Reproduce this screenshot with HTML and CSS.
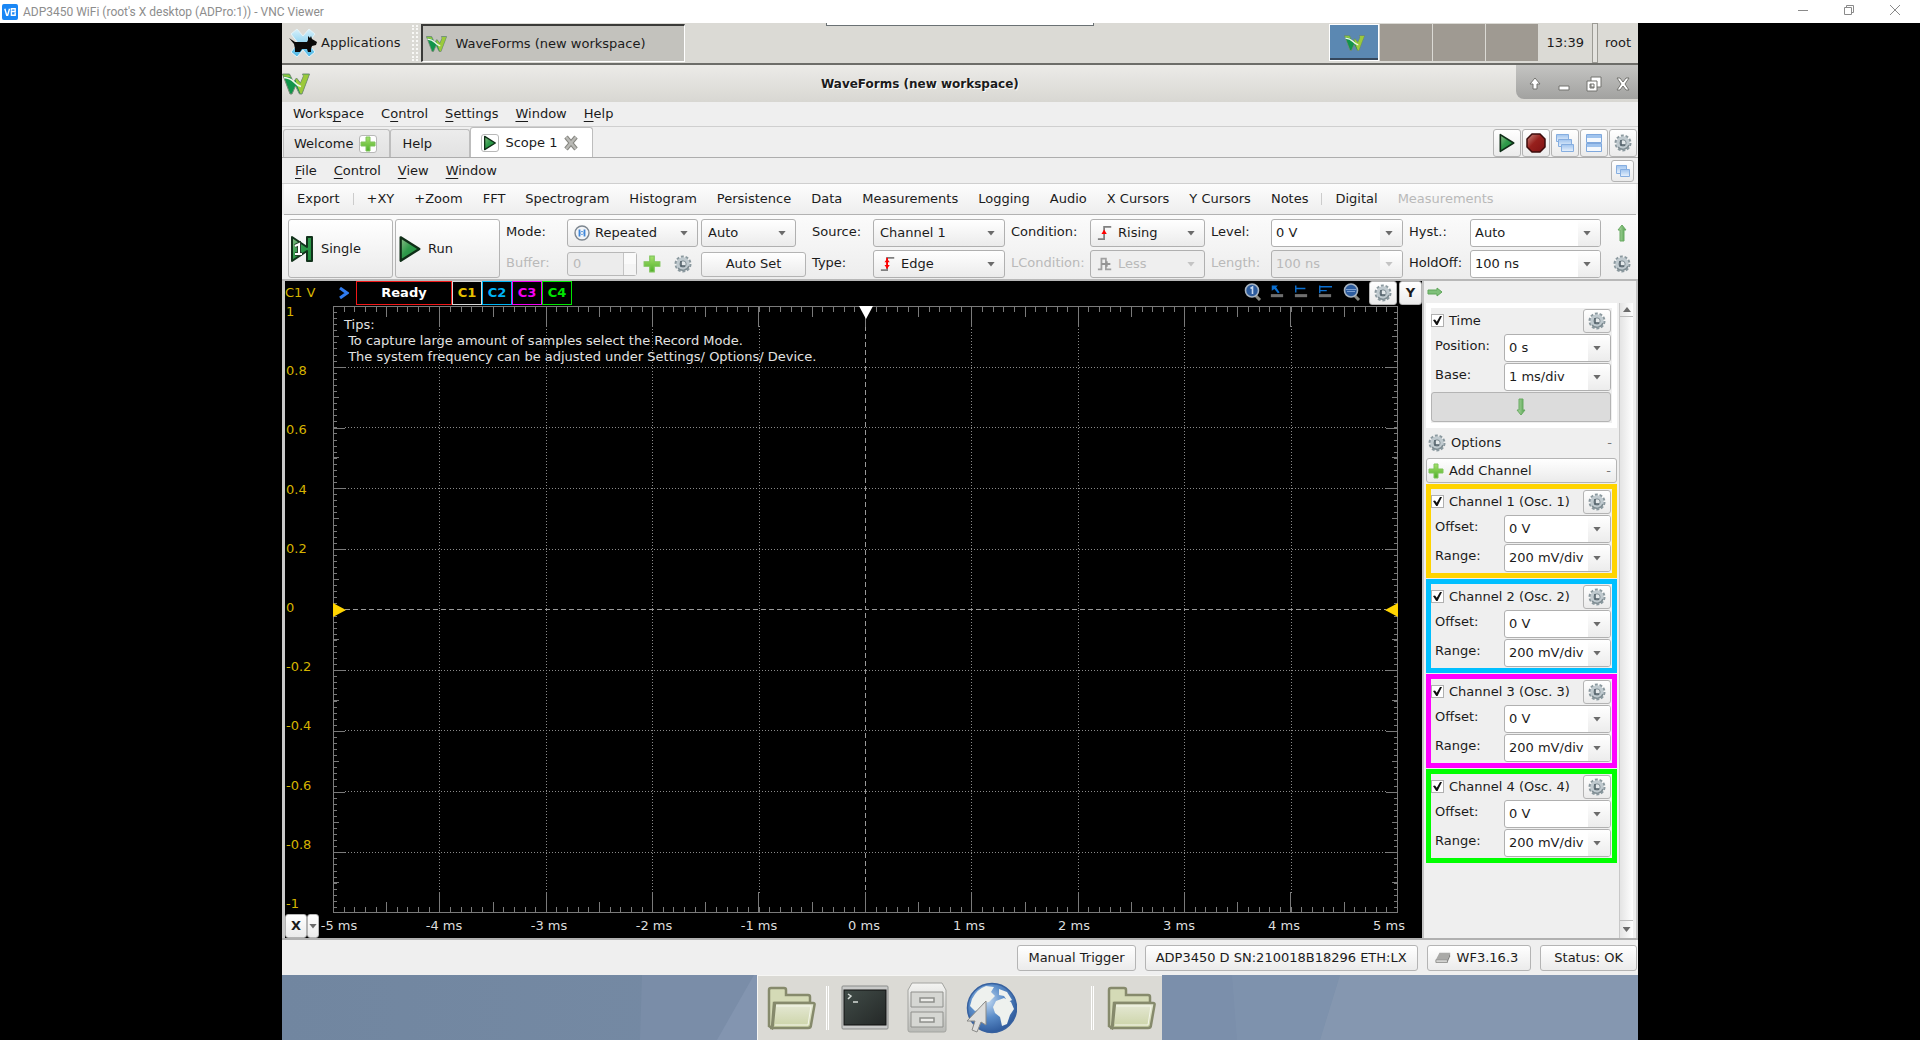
FILE: index.html
```html
<!DOCTYPE html>
<html lang="en">
<head>
<meta charset="utf-8">
<title>ADP3450 WiFi (root's X desktop (ADPro:1)) - VNC Viewer</title>
<link rel="stylesheet" href="styles.css">
</head>
<body>
<svg class="defs" aria-hidden="true">
  <defs>
    <linearGradient id="g-green" x1="0" y1="0" x2="1" y2="1"><stop offset="0" stop-color="#8fc08a"/><stop offset=".45" stop-color="#2f9a4a"/><stop offset="1" stop-color="#1c8a3c"/></linearGradient>
    <linearGradient id="g-plus" x1="0" y1="0" x2="0" y2="1"><stop offset="0" stop-color="#a5e26a"/><stop offset="1" stop-color="#4fae2a"/></linearGradient>
    <linearGradient id="g-arrow" x1="0" y1="0" x2="1" y2="0"><stop offset="0" stop-color="#b5dca9"/><stop offset="1" stop-color="#4fa04a"/></linearGradient>
    <linearGradient id="g-red" x1="0" y1="0" x2="1" y2="1"><stop offset="0" stop-color="#c98a80"/><stop offset=".45" stop-color="#97201c"/><stop offset="1" stop-color="#7e1214"/></linearGradient>
    <linearGradient id="g-win" x1="0" y1="0" x2="0" y2="1"><stop offset="0" stop-color="#9fc3ee"/><stop offset="1" stop-color="#e9f2fc"/></linearGradient>
    <linearGradient id="g-folder" x1="0" y1="0" x2="0" y2="1"><stop offset="0" stop-color="#e6e9d6"/><stop offset="1" stop-color="#cbd3a6"/></linearGradient>
    <linearGradient id="g-metal" x1="0" y1="0" x2="0" y2="1"><stop offset="0" stop-color="#f4f4f2"/><stop offset="1" stop-color="#b9bab6"/></linearGradient>
    <linearGradient id="g-term" x1="0" y1="0" x2="1" y2="1"><stop offset="0" stop-color="#414c48"/><stop offset="1" stop-color="#242827"/></linearGradient>
    <radialGradient id="g-globe" cx=".4" cy=".35" r=".7"><stop offset="0" stop-color="#c3daf2"/><stop offset=".5" stop-color="#5a8cc8"/><stop offset="1" stop-color="#2a5597"/></radialGradient>
    <linearGradient id="g-x" x1="0" y1="0" x2="0" y2="1"><stop offset="0" stop-color="#d9f1fb"/><stop offset="1" stop-color="#4bb7e6"/></linearGradient>
  </defs>
  <symbol id="i-logo" viewBox="0 0 28 22">
    <path d="M.5 1h7l4 8 3-4 4 5 3-7-1-2h7l-7.500 20h-2.500l-4-8-3.500 8H8z" fill="#12954a" stroke="#7b8a78"/>
    <path d="M21 1.500h6L19.800 20.500h-1.500L15 12l-1.500-5 1-1.500 4 5 3-7z" fill="#9cc93b"/>
    <path d="M1 1.500h6l2 3-7-1z" fill="#8cc63f"/>
    <path d="M2 4.500q6 .5 10 4.500 3 3.500 7 4.500" fill="none" stroke="#eef8ea" stroke-width="1.700"/>
  </symbol>
  <symbol id="i-xfce" viewBox="0 0 30 30">
    <path d="M3 6l6-5 6 7 6-7 6 5-7 9 7 9-6 5-6-7-6 7-6-5 7-9z" fill="url(#g-x)" stroke="#e6f4f8"/>
    <path d="M1 10l6 4h12l1-2 0-4 2 2 1-2 1 3 5 3-1 3-4 1-1 3v3h-3l-1-3h-5l-2 3H7v-3l-1-5z" fill="#0a0a0a"/>
  </symbol>
  <symbol id="i-plus" viewBox="0 0 16 16"><path d="M6 1h4v5h5v4h-5v5H6v-5H1V6h5z" fill="url(#g-plus)" stroke="#7fc45a"/></symbol>
  <symbol id="i-play" viewBox="0 0 16 18"><path d="M2 1.500l12 7.500-12 7.500z" fill="url(#g-green)" stroke="#0f2e17" stroke-width="1.500" stroke-linejoin="round"/></symbol>
  <symbol id="i-single" viewBox="0 0 26 28">
    <path d="M2 2l15 10V2h5v24h-5V16L2 26z" fill="url(#g-green)" stroke="#12331c" stroke-width="2" stroke-linejoin="round"/>
    <path d="M5 11l4-2v10M5 19h7" fill="none" stroke="#26402c" stroke-width="4"/>
    <path d="M5 11l4-2v10M5 19h7" fill="none" stroke="#fff" stroke-width="2"/>
  </symbol>
  <symbol id="i-stop" viewBox="0 0 20 20"><path d="M6 1h8l5 5v8l-5 5H6l-5-5V6z" fill="url(#g-red)" stroke="#3c0c0c" stroke-width="1.500"/></symbol>
  <symbol id="i-gear" viewBox="0 0 18 18">
    <circle cx="9" cy="9" r="7" fill="none" stroke="#8b999f" stroke-width="3" stroke-dasharray="2.700 1.700"/>
    <circle cx="9" cy="9" r="5" fill="none" stroke="#c0cacf" stroke-width="3.400"/>
    <path d="M4 13a6.500 6.500 0 0 0 11-2" fill="none" stroke="#7f8d93" stroke-width="1.500"/>
    <circle cx="9" cy="9" r="3.200" fill="#e4e9eb" stroke="#7d8b92"/>
    <path d="M7 6v5h4" fill="none" stroke="#4d5c66" stroke-width="1.500"/>
  </symbol>
  <symbol id="i-close" viewBox="0 0 16 16"><path d="M3 2l10 12M13 2L3 14" stroke="#85857f" stroke-width="4.500"/><path d="M3 2l10 12M13 2L3 14" stroke="#b9b9b5" stroke-width="2.500"/></symbol>
  <symbol id="i-cascade" viewBox="0 0 20 20"><g fill="url(#g-win)" stroke="#86aee0"><path d="M1.500 1.500h12v7h-12z"/><path d="M3.500 6.500h13v7h-13z"/><path d="M6.500 11.500h12v7h-12z"/></g></symbol>
  <symbol id="i-tile" viewBox="0 0 20 20"><g fill="#f4f8fd" stroke="#7fa8dd"><path d="M2.500 1.500h15v8h-15z"/><path d="M2.500 10.500h15v8h-15z"/></g><path d="M3 2h14v3H3zM3 11h14v3H3z" fill="#9fc3ee"/></symbol>
  <symbol id="i-restore" viewBox="0 0 16 16"><g fill="url(#g-win)" stroke="#86aee0"><path d="M1.500 2.500h10v8h-10z"/><path d="M5.500 6.500h9v7h-9z"/></g></symbol>
  <symbol id="i-repeat" viewBox="0 0 16 16"><circle cx="8" cy="8" r="7" fill="#f2f4f7" stroke="#7d868f" stroke-width="1.400"/><path d="M5.500 4.500v7M10.500 4.500v7" stroke="#3e86d8" stroke-width="1.800"/><path d="M6 8l3-2v4zM10 8L7 6v4z" fill="#3e86d8"/></symbol>
  <symbol id="i-rising" viewBox="0 0 16 18"><path d="M0 16h7V2h8" fill="none" stroke="#808080" stroke-width="2"/><path d="M7 5l3 5H4z" fill="#f00"/></symbol>
  <symbol id="i-edge" viewBox="0 0 16 18"><path d="M0 16h7V2h8" fill="none" stroke="#808080" stroke-width="2"/><path d="M7 2v12" stroke="#f00" stroke-width="2"/><path d="M7 3l3 4H4zM7 14l3-4H4z" fill="#f00"/></symbol>
  <symbol id="i-less" viewBox="0 0 16 18"><path d="M0 15h4V3h5v12h6" fill="none" stroke="#a0a0a0" stroke-width="2"/><path d="M4 9h10M10 6v6" stroke="#959595" stroke-width="2"/></symbol>
  <symbol id="i-up" viewBox="0 0 10 18"><path d="M5 1l4 5H7v11H3V6H1z" fill="url(#g-arrow)" stroke="#69aa62"/></symbol>
  <symbol id="i-down" viewBox="0 0 10 18"><path d="M5 17l4-5H7V1H3v11H1z" fill="url(#g-arrow)" stroke="#69aa62"/></symbol>
  <symbol id="i-right" viewBox="0 0 16 10"><path d="M15 5l-5 4V7H1V3h9V1z" fill="#7fc07a" stroke="#5ea658"/></symbol>
  <symbol id="i-zoom1" viewBox="0 0 18 18"><path d="M11 12l5 5" stroke="#8a8a84" stroke-width="3"/><circle cx="8" cy="7.500" r="6.500" fill="#2d5c9e" stroke="#a8b4c0" stroke-width="1.600"/><path d="M6.500 5.500L8.500 4v7" fill="none" stroke="#c5d8f0" stroke-width="1.600"/></symbol>
  <symbol id="i-zoom" viewBox="0 0 18 18"><path d="M11 12l5 5" stroke="#8a8a84" stroke-width="3"/><circle cx="8" cy="7.500" r="6.500" fill="#2d5c9e" stroke="#a8b4c0" stroke-width="1.600"/><path d="M3 6.500h10M4 8.500h8" stroke="#7d9fd0"/></symbol>
  <symbol id="i-cursor" viewBox="0 0 16 14"><path d="M1 10h14v3.500H1z" fill="#6f6f6f"/><path d="M2 0h7L7 2l4 6-2 1-4-5-3 2z" fill="#0b6fd0"/></symbol>
  <symbol id="i-mark1" viewBox="0 0 16 14"><path d="M1 10h14v3.500H1z" fill="#6f6f6f"/><path d="M2 0v8M2 3.500h11" stroke="#0b6fd0" stroke-width="1.600"/></symbol>
  <symbol id="i-mark2" viewBox="0 0 16 14"><path d="M1 10h14v3.500H1z" fill="#6f6f6f"/><path d="M2 0v9M2 1.500h14M2 6h8" stroke="#0b6fd0" stroke-width="1.600"/></symbol>
  <symbol id="i-drive" viewBox="0 0 18 14"><path d="M5 1h12l-3 8H1z" fill="#a9a9a7"/><path d="M1 9h13v3H1z" fill="#d8d8d6" stroke="#8d8d8b"/><path d="M14 9l3-8v4l-3 7z" fill="#7f7f7d"/></symbol>
  <symbol id="i-folder" viewBox="0 0 50 44">
    <path d="M3 40V4q0-2 2-2h13q2 0 2 2v5h22q2 0 2 2v6H8L6 42z" fill="#d4dab6" stroke="#868a6c" stroke-width="2.500"/>
    <path d="M9 17h38q2 0 1.500 2L45 39q0 3-3 3H4q3 0 3-5z" fill="url(#g-folder)" stroke="#868a6c" stroke-width="2.500"/>
    <path d="M10 20h35l-3 19H9" fill="none" stroke="#f4f6ea"/>
  </symbol>
  <symbol id="i-term" viewBox="0 0 48 46"><rect x="1" y="1" width="46" height="43" rx="1" fill="#c9cac9" stroke="#8b8d8b"/><rect x="3" y="5" width="42" height="35" fill="url(#g-term)" stroke="#111"/><path d="M7 9l3 2-3 3M12 17h5" fill="none" stroke="#d6dcd8" stroke-width="1.500"/></symbol>
  <symbol id="i-cabinet" viewBox="0 0 40 52">
    <path d="M5 1h30l4 7v40q0 2-2 2H3q-2 0-2-2V8z" fill="url(#g-metal)" stroke="#a3a4a0"/>
    <g fill="#d6d7d3" stroke="#8f908c"><path d="M4 10h32v15H4zM4 30h32v15H4z"/></g>
    <g fill="#ecece9" stroke="#8f908c" stroke-width="1.500"><path d="M13 16h14v4H13zM13 36h14v4H13z"/></g>
  </symbol>
  <symbol id="i-globe" viewBox="0 0 52 54">
    <circle cx="27" cy="27" r="24.500" fill="url(#g-globe)" stroke="#37619f" stroke-width="1.500"/>
    <path d="M7 18q5-10 14-13l8 1-3 5 4 4-6 6-6 1-2 6-6 2-5-5zM34 8l8 3 5 8-4 2-4-6-5-1zM31 20l8-3 7 4 3 7-4 6-3 9-5 2-2-9-5-4-2-6z" fill="#eef1ee"/>
    <path d="M21 20v24l-5-3-4 10-5-2 3-9H2z" fill="#dededc" stroke="#8a8a88"/>
  </symbol>
</svg>

<header class="viewer-bar">
  <svg class="viewer-logo" viewBox="0 0 17 17"><rect width="17" height="17" rx="2" fill="#1a87f5"/><path d="M3 5l2 7h1l2-7M10 7V5h4v3h-4v4h4V9" fill="none" stroke="#fff" stroke-width="1.500"/></svg>
  <h1 class="viewer-title">ADP3450 WiFi (root's X desktop (ADPro:1)) - VNC Viewer</h1>
  <div class="viewer-controls">
    <button aria-label="Minimize"><svg viewBox="0 0 10 10"><path d="M0 5.500h10"/></svg></button>
    <button aria-label="Restore"><svg viewBox="0 0 10 10"><path d="M.5 2.500h7v7h-7zM2.500 2.500v-2h7v7h-2"/></svg></button>
    <button aria-label="Close"><svg viewBox="0 0 10 10"><path d="M0 0l10 10M10 0L0 10"/></svg></button>
  </div>
</header>

<main class="remote">
  <div class="panel">
    <button class="apps"><svg class="s30"><use href="#i-xfce"/></svg>Applications</button>
    <span class="grip"></span>
    <button class="task"><svg class="logo-sm"><use href="#i-logo"/></svg>WaveForms (new workspace)</button>
    <span class="viewer-tab"></span>
    <div class="pager">
      <button class="page current" aria-label="Workspace 1"><svg class="logo-sm"><use href="#i-logo"/></svg></button>
      <button class="page" aria-label="Workspace 2"></button>
      <button class="page" aria-label="Workspace 3"></button>
      <button class="page" aria-label="Workspace 4"></button>
    </div>
    <time class="clock">13:39</time>
    <span class="handle"></span>
    <button class="user">root</button>
  </div>

  <section class="window">
    <div class="titlebar">
      <svg class="logo-lg"><use href="#i-logo"/></svg>
      <h2>WaveForms (new workspace)</h2>
      <div class="wm">
        <button aria-label="Shade"><svg viewBox="0 0 16 16"><path d="M8 2l5 6h-3v5H6V8H3z"/></svg></button>
        <button aria-label="Minimize"><svg viewBox="0 0 16 16"><path d="M3 10h10v4H3z"/></svg></button>
        <button aria-label="Restore"><svg viewBox="0 0 16 16"><path d="M5 1h10v10H5z"/><path d="M1 5h10v10H1zM4 8v4h4V8z"/></svg></button>
        <button aria-label="Close"><svg viewBox="0 0 16 16"><path d="M2 2h3l3 4 3-4h3l-4 6 4 6h-3l-3-4-3 4H2l4-6z"/></svg></button>
      </div>
    </div>

    <nav class="menubar">
      <button>Works<u>p</u>ace</button><button>C<u>o</u>ntrol</button><button><u>S</u>ettings</button><button><u>W</u>indow</button><button><u>H</u>elp</button>
    </nav>

    <div class="tabbar">
      <div class="tab"><button>Welcome</button><button class="tab-icon" aria-label="New instrument"><svg class="s16"><use href="#i-plus"/></svg></button></div>
      <div class="tab help"><button>Help</button></div>
      <div class="tab active"><button class="tab-icon" aria-label="Run scope"><svg class="s16"><use href="#i-play"/></svg></button><button>Scope 1</button><button aria-label="Close tab"><svg class="s16"><use href="#i-close"/></svg></button></div>
      <div class="tab-tools">
        <button class="btn" aria-label="Run all"><svg class="s20"><use href="#i-play"/></svg></button>
        <button class="btn" aria-label="Stop all"><svg class="s20"><use href="#i-stop"/></svg></button>
        <button class="btn" aria-label="Cascade"><svg class="s20"><use href="#i-cascade"/></svg></button>
        <button class="btn" aria-label="Tile"><svg class="s20"><use href="#i-tile"/></svg></button>
        <button class="btn" aria-label="Settings"><svg class="s18"><use href="#i-gear"/></svg></button>
      </div>
    </div>

    <nav class="menubar scope-menu">
      <button><u>F</u>ile</button><button><u>C</u>ontrol</button><button><u>V</u>iew</button><button><u>W</u>indow</button>
      <button class="btn undock" aria-label="Undock"><svg class="s16"><use href="#i-restore"/></svg></button>
    </nav>

    <div class="toolbar">
      <button>Export</button><i></i><button>+XY</button><button>+Zoom</button><button>FFT</button><button>Spectrogram</button><button>Histogram</button><button>Persistence</button><button>Data</button><button>Measurements</button><button>Logging</button><button>Audio</button><button>X Cursors</button><button>Y Cursors</button><button>Notes</button><i></i><button>Digital</button><button disabled>Measurements</button>
    </div>

    <div class="controls">
      <button class="btn big"><svg class="s28"><use href="#i-single"/></svg>Single</button>
      <button class="btn big run"><svg class="s28"><use href="#i-play"/></svg>Run</button>
      <div class="fields mode">
        <label for="mode">Mode:</label>
        <span class="select icon"><select id="mode"><option>Repeated</option></select><svg class="s16 pic"><use href="#i-repeat"/></svg></span>
        <span class="select"><select aria-label="Trigger mode"><option>Auto</option></select></span>
        <label for="buffer" class="off">Buffer:</label>
        <span class="buffer"><span class="spin"><input id="buffer" value="0" disabled><span class="steps"></span></span><button class="flat" aria-label="Add buffer"><svg class="s18"><use href="#i-plus"/></svg></button><button class="flat" aria-label="Buffer options"><svg class="s18"><use href="#i-gear"/></svg></button></span>
        <button class="btn autoset">Auto Set</button>
      </div>
      <div class="fields source">
        <label for="source">Source:</label>
        <span class="select"><select id="source"><option>Channel 1</option></select></span>
        <label for="type">Type:</label>
        <span class="select icon"><select id="type"><option>Edge</option></select><svg class="s16 pic"><use href="#i-edge"/></svg></span>
      </div>
      <div class="fields cond">
        <label for="cond">Condition:</label>
        <span class="select icon"><select id="cond"><option>Rising</option></select><svg class="s16 pic"><use href="#i-rising"/></svg></span>
        <label for="lcond" class="off">LCondition:</label>
        <span class="select icon"><select id="lcond" disabled><option>Less</option></select><svg class="s16 pic"><use href="#i-less"/></svg></span>
      </div>
      <div class="fields level">
        <label for="level">Level:</label>
        <span class="combo"><input id="level" value="0 V"><button aria-label="Choose level"></button></span>
        <label for="length" class="off">Length:</label>
        <span class="combo"><input id="length" value="100 ns" disabled><button aria-label="Choose length" disabled></button></span>
      </div>
      <div class="fields hyst">
        <label for="hyst">Hyst.:</label>
        <span class="combo"><input id="hyst" value="Auto"><button aria-label="Choose hysteresis"></button></span>
        <button class="flat" aria-label="Collapse"><svg class="s18"><use href="#i-up"/></svg></button>
        <label for="holdoff">HoldOff:</label>
        <span class="combo"><input id="holdoff" value="100 ns"><button aria-label="Choose hold-off"></button></span>
        <button class="flat" aria-label="Trigger options"><svg class="s18"><use href="#i-gear"/></svg></button>
      </div>
    </div>

    <div class="work">
      <div class="scope">
        <div class="scope-head">
          <span class="unit">C1 V</span>
          <svg class="chev" viewBox="0 0 10 12"><path d="M1 1l7 5-7 5" fill="none" stroke="#2f7bf0" stroke-width="3"/></svg>
          <strong class="state">Ready</strong>
          <button class="ch c1">C1</button><button class="ch c2">C2</button><button class="ch c3">C3</button><button class="ch c4">C4</button>
          <div class="zooms">
            <button class="flat" aria-label="Zoom 1:1"><svg class="s18"><use href="#i-zoom1"/></svg></button>
            <button class="flat" aria-label="Cursor"><svg class="s14"><use href="#i-cursor"/></svg></button>
            <button class="flat" aria-label="Marker"><svg class="s14"><use href="#i-mark1"/></svg></button>
            <button class="flat" aria-label="Markers"><svg class="s14"><use href="#i-mark2"/></svg></button>
            <button class="flat" aria-label="Zoom"><svg class="s18"><use href="#i-zoom"/></svg></button>
          </div>
          <button class="btn gearbtn" aria-label="Plot options"><svg class="s18"><use href="#i-gear"/></svg></button>
          <button class="btn ybtn">Y</button>
        </div>
        <div class="plot-row">
          <div class="y-axis"><span>1</span><span>0.8</span><span>0.6</span><span>0.4</span><span>0.2</span><span>0</span><span>-0.2</span><span>-0.4</span><span>-0.6</span><span>-0.8</span><span>-1</span></div>
          <div class="plot">
            <svg class="grid" viewBox="0 0 1066 608" preserveAspectRatio="none" shape-rendering="crispEdges">
              <g stroke="#8a8a8a" stroke-dasharray="1 2" fill="none">
                <path d="M106.500 20v568M213.500 20v568M319.500 20v568M426.500 20v568M639.500 20v568M746.500 20v568M852.500 20v568M959.500 20v568"/>
                <path d="M12 61.500h1042M12 121.500h1042M12 182.500h1042M12 243.500h1042M12 365.500h1042M12 425.500h1042M12 486.500h1042M12 547.500h1042"/>
              </g>
              <path d="M532.500 20v568M12 304.500h1042" stroke="#9a9a9a" stroke-dasharray="5 3"/>
              <g stroke="#7a7a7a" fill="none">
                <path d="M.5 .5h1065v607H.5z"/>
                <path d="M0 3.500h1066M0 604.500h1066" stroke-width="6" stroke-dasharray="1 9.650"/>
                <path d="M53.250 6h1000M53.250 602h1000" stroke-width="11" stroke-dasharray="1 105.500"/>
                <path d="M106.250 11h900M106.250 597h900" stroke-width="21" stroke-dasharray="1 105.500"/>
                <path d="M2 0v608M1064 0v608" stroke-width="4" stroke-dasharray="1 5.080"/>
                <path d="M3.500 30v560M1062.500 30v560" stroke-width="6" stroke-dasharray="1 59.800"/>
                <path d="M6.500 61v530M1059.500 61v530" stroke-width="12" stroke-dasharray="1 59.800"/>
              </g>
            </svg>
            <svg class="mark top" viewBox="0 0 14 14"><path d="M0 0h14L7 13z" fill="#fff"/></svg>
            <svg class="mark left" viewBox="0 0 14 14"><path d="M0 0v14l13-7z" fill="#ffd400"/></svg>
            <svg class="mark right" viewBox="0 0 14 14"><path d="M14 0v14L1 7z" fill="#ffd400"/></svg>
            <p class="tips">Tips:
 To capture large amount of samples select the Record Mode.
 The system frequency can be adjusted under Settings/ Options/ Device.</p>
          </div>
        </div>
        <div class="x-row">
          <button class="btn xbtn">X</button><button class="btn xdrop" aria-label="X axis menu"></button>
          <div class="x-axis"><span>-5 ms</span><span>-4 ms</span><span>-3 ms</span><span>-2 ms</span><span>-1 ms</span><span>0 ms</span><span>1 ms</span><span>2 ms</span><span>3 ms</span><span>4 ms</span><span>5 ms</span></div>
        </div>
      </div>

      <aside class="side">
        <button class="flat hide" aria-label="Hide panel"><svg class="s16"><use href="#i-right"/></svg></button>
        <div class="side-body">
          <div class="groups">
            <fieldset class="group time">
              <label class="check"><input type="checkbox" checked>Time</label><button class="btn gear" aria-label="Time options"><svg class="s18"><use href="#i-gear"/></svg></button>
              <label for="pos">Position:</label><span class="combo"><input id="pos" value="0 s"><button aria-label="Choose position"></button></span>
              <label for="base">Base:</label><span class="combo"><input id="base" value="1 ms/div"><button aria-label="Choose base"></button></span>
              <button class="btn expand" aria-label="Expand"><svg class="s18"><use href="#i-down"/></svg></button>
            </fieldset>
            <button class="options"><svg class="s18"><use href="#i-gear"/></svg>Options<span>-</span></button>
            <button class="btn add"><svg class="s16"><use href="#i-plus"/></svg>Add Channel<span>-</span></button>
            <fieldset class="group ch-1">
              <label class="check"><input type="checkbox" checked>Channel 1 (Osc. 1)</label><button class="btn gear" aria-label="Channel 1 options"><svg class="s18"><use href="#i-gear"/></svg></button>
              <label for="o1">Offset:</label><span class="combo"><input id="o1" value="0 V"><button aria-label="Choose offset"></button></span>
              <label for="r1">Range:</label><span class="combo"><input id="r1" value="200 mV/div"><button aria-label="Choose range"></button></span>
            </fieldset>
            <fieldset class="group ch-2">
              <label class="check"><input type="checkbox" checked>Channel 2 (Osc. 2)</label><button class="btn gear" aria-label="Channel 2 options"><svg class="s18"><use href="#i-gear"/></svg></button>
              <label for="o2">Offset:</label><span class="combo"><input id="o2" value="0 V"><button aria-label="Choose offset"></button></span>
              <label for="r2">Range:</label><span class="combo"><input id="r2" value="200 mV/div"><button aria-label="Choose range"></button></span>
            </fieldset>
            <fieldset class="group ch-3">
              <label class="check"><input type="checkbox" checked>Channel 3 (Osc. 3)</label><button class="btn gear" aria-label="Channel 3 options"><svg class="s18"><use href="#i-gear"/></svg></button>
              <label for="o3">Offset:</label><span class="combo"><input id="o3" value="0 V"><button aria-label="Choose offset"></button></span>
              <label for="r3">Range:</label><span class="combo"><input id="r3" value="200 mV/div"><button aria-label="Choose range"></button></span>
            </fieldset>
            <fieldset class="group ch-4">
              <label class="check"><input type="checkbox" checked>Channel 4 (Osc. 4)</label><button class="btn gear" aria-label="Channel 4 options"><svg class="s18"><use href="#i-gear"/></svg></button>
              <label for="o4">Offset:</label><span class="combo"><input id="o4" value="0 V"><button aria-label="Choose offset"></button></span>
              <label for="r4">Range:</label><span class="combo"><input id="r4" value="200 mV/div"><button aria-label="Choose range"></button></span>
            </fieldset>
          </div>
          <div class="scroll"><span class="tri up"></span><span class="tri down"></span></div>
        </div>
      </aside>
    </div>

    <footer class="status">
      <button class="btn">Manual Trigger</button>
      <button class="btn">ADP3450 D SN:210018B18296 ETH:LX</button>
      <button class="btn ver"><svg class="s16"><use href="#i-drive"/></svg>WF3.16.3</button>
      <button class="btn ok">Status: OK</button>
    </footer>
  </section>

  <div class="desktop">
    <svg class="wallpaper" viewBox="0 0 1356 65" preserveAspectRatio="none"><path d="M360 0h115v65H358z" fill="#7a8da8"/><path d="M472 0h3v65h-40z" fill="#8395b0"/><path d="M880 0h80l6 65h-86z" fill="#7b8fab"/><path d="M950 0h108l-20 65h-83z" fill="#7e92ad"/><path d="M1058 0h298v65h-318z" fill="#8597b0"/></svg>
    <nav class="dock">
      <button aria-label="Desktop folder"><svg class="folder"><use href="#i-folder"/></svg></button>
      <i></i>
      <button aria-label="Terminal"><svg class="term"><use href="#i-term"/></svg></button>
      <button aria-label="File manager"><svg class="cab"><use href="#i-cabinet"/></svg></button>
      <button aria-label="Web browser"><svg class="globe"><use href="#i-globe"/></svg></button>
      <i class="last"></i>
      <button aria-label="Home folder"><svg class="folder"><use href="#i-folder"/></svg></button>
    </nav>
  </div>
</main>
</body>
</html>
```
FILE: styles.css
```css
* { box-sizing: border-box; }

body {
  margin: 0;
  min-height: 100vh;
  display: flex;
  flex-direction: column;
  background: #000;
  color: #1b1b1b;
  font: 13px/16px "DejaVu Sans", sans-serif;
}

h1, h2, p, fieldset { margin: 0; padding: 0; border: 0; min-width: 0; }
button, input, select { font: inherit; color: inherit; margin: 0; }
button { padding: 0; border: 0; background: none; white-space: nowrap; }
svg { display: block; flex: none; }
i { flex: none; }
label { white-space: nowrap; }

.defs { position: absolute; width: 0; height: 0; }
.s14 { width: 14px; height: 13px; }
.s16 { width: 16px; height: 16px; }
.s18 { width: 18px; height: 18px; }
.s20 { width: 20px; height: 20px; }
.s28 { width: 26px; height: 28px; }
.s30 { width: 30px; height: 30px; }

/* viewer frame */
.viewer-bar { height: 23px; display: flex; align-items: center; gap: 5px; background: #fff; }
.viewer-logo { width: 16px; height: 16px; margin-left: 2px; }
.viewer-title { font: 12px/16px Roboto, sans-serif; color: #8d8d8d; }
.viewer-controls { display: flex; margin-left: auto; margin-right: 2px; align-self: flex-start; }
.viewer-controls button { width: 46px; height: 20px; display: grid; place-items: center; }
.viewer-controls svg { width: 10px; height: 10px; fill: none; stroke: #8a8a8a; overflow: visible; }

.remote { flex: 1; width: 70.625%; margin: 0 auto; display: flex; flex-direction: column; }

/* desktop panel */
.panel {
  height: 42px;
  display: flex;
  align-items: center;
  background: #dbdad5;
  border-bottom: 2px solid #6d6d69;
}
.apps { display: flex; align-items: center; gap: 3px; margin-left: 6px; }
.grip { width: 6px; height: 36px; margin: 0 3px 0 12px; border: dotted #f8f8f6; border-width: 0 2px; }
.task {
  flex: 0 1 264px;
  height: 38px;
  display: flex;
  align-items: center;
  gap: 8px;
  padding-left: 3px;
  background: #c3c2bd;
  border: solid;
  border-width: 2px 1px 1px 2px;
  border-color: #3a3a38 #fff #fff #3a3a38;
}
.logo-sm { width: 21px; height: 18px; }
.viewer-tab {
  width: 268px;
  height: 3px;
  align-self: flex-start;
  margin-left: 141px;
  background: #fff;
  border: solid #6a7174;
  border-width: 0 1px 1px;
}
.pager { display: flex; gap: 1px; margin-left: auto; align-self: stretch; padding: 1px 0 2px; }
.page { width: 52px; background: #9f9a92; }
.page.current {
  display: grid;
  place-items: center;
  background: #5b88b2;
  border: solid #fff;
  border-width: 1px;
  box-shadow: inset 0 -2px #35475c;
  width: 50px;
}
.clock { margin: 0 8px; }
.handle { width: 6px; align-self: stretch; border: 1px solid #9c9b95; background: #e4e3df; }
.user { margin: 0 7px; }

/* application window */
.window { flex: 1; display: flex; flex-direction: column; background: #efefef; }
.titlebar {
  height: 37px;
  display: grid;
  grid-template-columns: 539px auto 1fr;
  align-items: center;
  background: linear-gradient(#ecebe8, #d8d7d2);
}
.titlebar h2 { font-size: 12px; line-height: 16px; text-shadow: 1px 1px #fff; }
.logo-lg { width: 28px; height: 22px; }
.wm {
  justify-self: end;
  align-self: start;
  height: 34px;
  width: 122px;
  display: flex;
  justify-content: space-around;
  align-items: center;
  padding: 4px 0 0 4px;
  background: linear-gradient(#c4c4c2, #a2a2a0);
  border-bottom-left-radius: 8px;
}
.wm svg { width: 16px; height: 16px; fill: #fff; stroke: #73736f; fill-rule: evenodd; }

.menubar { height: 25px; display: flex; align-items: center; gap: 1px; padding-left: 3px; border-bottom: 1px solid #cfcfcf; }
.menubar button { padding: 0 8px; }
.menubar u { text-underline-offset: 3px; text-decoration-thickness: 1px; }
.scope-menu { height: 26px; padding-left: 5px; }
.menubar .undock { width: 23px; height: 22px; padding: 0; margin: 0 4px 0 auto; }

.btn {
  display: flex;
  align-items: center;
  justify-content: center;
  color: #1b1b1b;
  background: linear-gradient(#fff, #ebebeb);
  border: 1px solid #b4b4b4;
  border-radius: 3px;
}
.flat { display: grid; place-items: center; }

.tabbar { height: 31px; display: flex; align-items: flex-end; padding-left: 1px; border-bottom: 1px solid #adadad; }
.tab {
  height: 28px;
  display: flex;
  align-items: center;
  gap: 6px;
  padding: 0 12px 0 10px;
  background: linear-gradient(#ececec, #e2e2e2);
  border: 1px solid #bdbdbd;
  border-bottom: 0;
  border-radius: 3px 3px 0 0;
}
.tab.help { width: 80px; padding-left: 11px; }
.tab.active { height: 30px; background: #fff; width: 123px; padding: 0 10px; }
.tab-icon { border: 1px solid #b8b8b8; border-radius: 3px; background: #fff; }
.tab-tools { display: flex; gap: 1px; margin-left: auto; margin-right: 1px; }
.tab-tools .btn { width: 28px; height: 28px; }

.toolbar {
  height: 31px;
  display: flex;
  align-items: center;
  margin: 0 2px;
  padding-left: 3px;
  background: linear-gradient(#fdfdfd, #eee);
  border-bottom: 1px solid #b2b2b2;
}
.toolbar button { padding: 0 10px; }
.toolbar i { width: 1px; height: 12px; margin: 0 3px; background: #ccc; }
button:disabled, .off { color: #b9b9b9; }

/* acquisition controls */
.controls {
  height: 66px;
  display: flex;
  align-items: flex-start;
  gap: 6px;
  padding: 4px 10px 0 6px;
  background: linear-gradient(#fbfbfb, #ededed);
  border-bottom: 2px solid #b8b8b8;
}
.big { width: 105px; height: 59px; justify-content: flex-start; gap: 5px; padding-left: 1px; }
.big.run { margin-left: -4px; }
.fields { display: grid; grid-auto-rows: 28px; row-gap: 3px; align-items: center; flex: 0 1 auto; }
.fields > label { line-height: 26px; align-self: start; }
.mode { grid-template-columns: 61px 131px 108px; }
.mode > :nth-child(3) { width: 95px; margin-left: 3px; }
.source { grid-template-columns: 61px 132px; }
.cond { grid-template-columns: 79px 115px; }
.level { grid-template-columns: 60px 132px; }
.hyst { grid-template-columns: 61px 131px 20px; flex: 1; }
.hyst .flat { margin-left: 12px; }

.select { display: grid; }
.select > * { grid-area: 1 / 1; }
.select select {
  appearance: none;
  width: 100%;
  height: 28px;
  padding: 0 6px;
  background: linear-gradient(#fff, #ebebeb);
  border: 1px solid #b0b0b0;
  border-radius: 3px;
}
.select select:disabled { color: #b9b9b9; opacity: 1; background: #efefef; }
.select.icon select { padding-left: 27px; }
.pic { align-self: center; margin-left: 7px; pointer-events: none; }
.select::after, .combo button::after, .xdrop::after, .tri::after {
  content: "";
  width: 8px;
  height: 5px;
  background: #6b6b6b;
  clip-path: polygon(0 0, 100% 0, 50% 100%);
}
.select::after { grid-area: 1 / 1; place-self: center end; margin-right: 10px; pointer-events: none; }
.select:has(:disabled)::after, .combo button:disabled::after { background: #c4c4c4; }

.combo { display: flex; height: 28px; background: #fff; border: 1px solid #b0b0b0; border-radius: 3px; overflow: hidden; min-width: 0; }
.combo input { flex: 1; width: 0; min-width: 0; border: 0; padding: 0 0 0 4px; background: none; }
.combo button { flex: none; width: 22px; padding-right: 4px; display: grid; place-items: center; background: linear-gradient(#fff, #ececec); }
input:disabled { color: #b9b9b9; }
.combo:has(:disabled) { background: #ececec; }

.buffer { display: flex; align-items: center; }
.spin { width: 71px; height: 24px; display: flex; border: 1px solid #b8b8b8; border-radius: 3px; background: #ececec; }
.spin input { width: 56px; border: 0; border-right: 1px solid #c4c4c4; padding: 0 5px; background: none; }
.steps { flex: 1; background: linear-gradient(#fafafa 49%, #d8d8d8 50%, #f4f4f4 52%); }
.buffer .flat { width: 31px; }
.autoset { width: 105px; height: 25px; margin-left: 3px; }

/* work area */
.work { flex: 1; display: grid; grid-template-columns: minmax(0, 1fr) 216px; padding-left: 3px; background: #c9c9c9; border-bottom: 2px solid #b0b0b0; }
.scope { display: flex; flex-direction: column; background: #000; color: #ddd; min-width: 0; }
.scope-head { height: 24px; display: flex; align-items: stretch; }
.scope-head > svg { align-self: center; }
.unit { width: 54px; line-height: 24px; color: #d6b400; }
.chev { width: 10px; height: 12px; margin-right: 7px; }
.state { width: 96px; border: 1px solid #f01818; color: #fff; line-height: 22px; text-align: center; }
.ch { width: 30px; border: 1px solid; font-weight: bold; }
.ch.c1 { color: #e6c200; border-color: #d8d8d8; }
.ch.c2 { color: #00b4f5; }
.ch.c3 { color: #f400f4; }
.ch.c4 { color: #00e600; }
.zooms { display: flex; margin-left: auto; margin-right: 3px; }
.zooms button { width: 24px; padding-bottom: 3px; }
.zooms button:last-child { width: 29px; }
.gearbtn { width: 28px; }
.ybtn { width: 23px; margin-left: 2px; font-weight: bold; }

.plot-row { flex: 1; display: grid; grid-template-columns: 48px minmax(0, 1fr); padding: 1px 24px 0 0; }
.y-axis { display: flex; flex-direction: column; justify-content: space-between; color: #d6b400; padding-left: 1px; margin: -2px 0 1px; }
.plot { position: relative; }
.grid { position: absolute; inset: 0; width: 100%; height: 100%; }
.mark { position: absolute; width: 14px; height: 14px; }
.mark.top { left: calc(50% - 7px); top: 0; }
.mark.left { left: 0; top: calc(50% - 7px); }
.mark.right { right: 0; top: calc(50% - 7px); }
.tips { position: absolute; left: 11px; top: 11px; white-space: pre; color: #e2e2e2; }

.x-row { height: 25px; display: flex; align-items: stretch; }
.xbtn { width: 22px; font-weight: bold; margin-top: 1px; }
.xdrop { width: 12px; margin-top: 1px; }
.x-axis { flex: 1; display: flex; justify-content: space-between; align-items: center; margin: 0 33px 0 20px; }
.x-axis span { width: 0; display: flex; justify-content: center; white-space: nowrap; }

/* channel side panel */
.side { display: flex; flex-direction: column; background: #efefef; border-left: 2px solid #c4c4c4; border-right: 2px solid #c4c4c4; }
.hide { height: 22px; width: 22px; }
.side-body { flex: 1; display: grid; grid-template-columns: 191px 14px; gap: 2px; padding-left: 2px; }
.groups { display: flex; flex-direction: column; gap: 1px; }
.group {
  display: grid;
  grid-template-columns: 73px minmax(0, 1fr);
  grid-auto-rows: 28px;
  grid-template-rows: 25px;
  gap: 1px 0;
  border: 5px solid #fff;
  padding: 0 1px 1px 0;
  align-items: center;
}
.group > label { padding-left: 4px; line-height: 24px; align-self: start; }
.group .check { grid-column: 1 / -1; grid-row: 1; display: flex; align-items: center; gap: 5px; padding-left: 0; line-height: 25px; }
.group .gear { grid-column: 2; grid-row: 1; justify-self: end; width: 28px; height: 24px; }
.group.time { grid-template-rows: 25px 28px 28px 30px; }
.expand { grid-column: 1 / -1; height: 30px; background: #dcdcdc; }
.check input {
  appearance: none;
  width: 13px;
  height: 13px;
  display: grid;
  place-items: center;
  background: #fff;
  border: 1px solid #b0b0b0;
}
.check input:checked::after {
  content: "";
  width: 9px;
  height: 9px;
  background: #111;
  clip-path: polygon(0 45%, 22% 40%, 42% 65%, 78% 0, 100% 0, 50% 100%, 36% 100%);
}
.ch-1 { border-color: #ffd400; }
.ch-2 { border-color: #00bfff; }
.ch-3 { border-color: #f0f; }
.ch-4 { border-color: #0f0; }
.options, .add { display: flex; align-items: center; gap: 5px; padding: 0 5px 0 2px; }
.options { height: 28px; }
.add { height: 25px; justify-content: flex-start; padding-left: 1px; }
.options span, .add span { margin-left: auto; color: #777; }
.scroll { display: flex; flex-direction: column; justify-content: space-between; background: linear-gradient(90deg, #e4e4e4, #fff); border-left: 1px solid #c8c8c8; }
.tri { height: 14px; display: grid; place-items: center; border-bottom: 1px solid #bbb; }
.tri.up::after { transform: rotate(180deg); }
.tri.down { border: 0; border-top: 1px solid #bbb; height: 18px; }

.status { height: 35px; display: flex; justify-content: flex-end; align-items: center; gap: 9px; padding-right: 1px; }
.status .btn { height: 26px; padding: 0 10px; }
.status .ver { gap: 6px; padding: 0 12px 0 7px; }
.status .ok { padding: 0 13px; }

/* desktop and dock */
.desktop { height: 65px; display: grid; justify-items: center; background: linear-gradient(90deg, #7186a0, #7d91ab); }
.desktop > * { grid-area: 1 / 1; }
.wallpaper { width: 100%; height: 65px; }
.dock {
  z-index: 1;
  width: 405px;
  display: flex;
  align-items: center;
  margin-right: 1px;
  padding: 0 6px 0 8px;
  background: #dbdad5;
  border: solid #f6f6f4;
  border-width: 1px 0 0 1px;
}
.dock i { width: 3px; height: 44px; margin: 0 12px 0 10px; border: solid; border-width: 0 1px; border-color: #8f8f8b #fff; }
.dock .last { margin: 0 12px 0 auto; }
.folder { width: 50px; height: 44px; }
.term { width: 48px; height: 46px; }
.cab { width: 40px; height: 52px; margin: 0 18px; }
.globe { width: 52px; height: 54px; }
```
